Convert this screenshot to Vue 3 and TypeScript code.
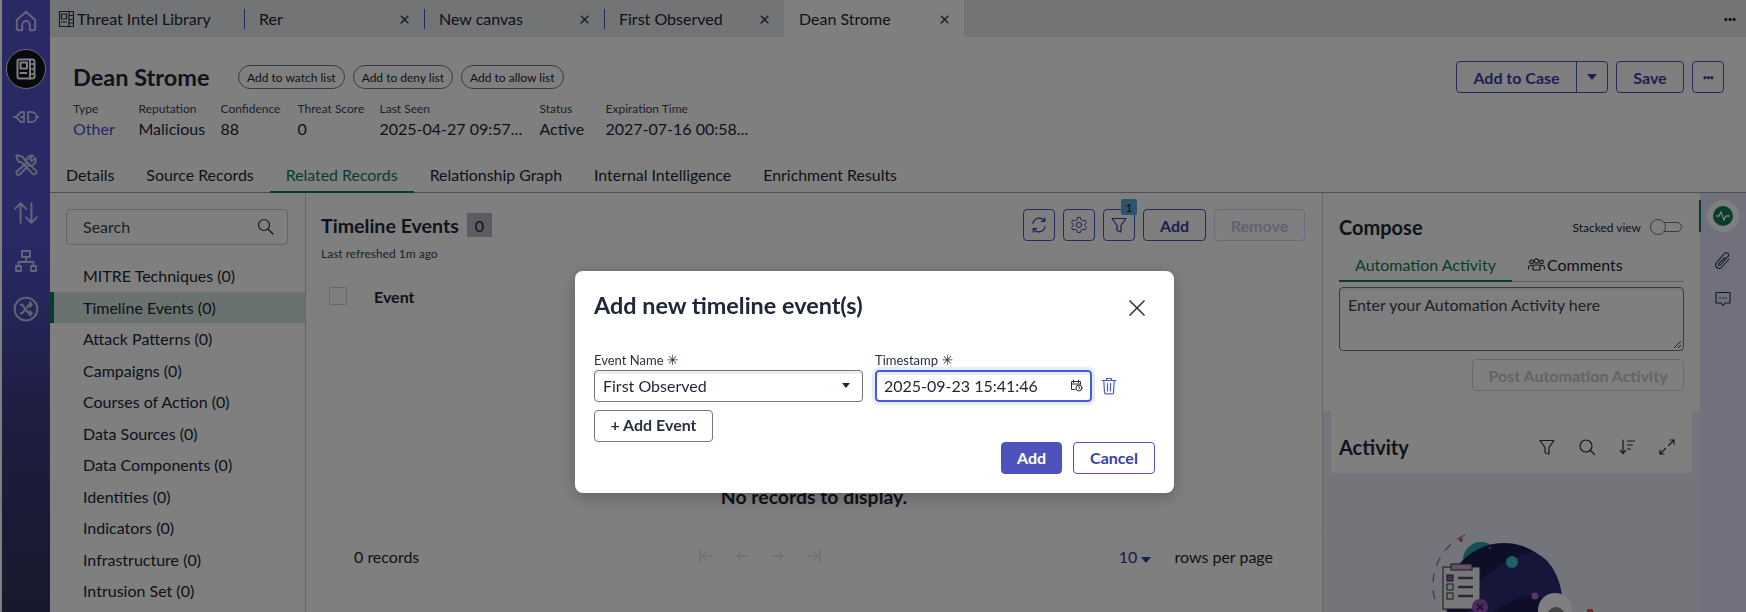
<script setup lang="ts">
interface MetaItem {
  label: string;
  value: string;
  link?: boolean;
}

const openTabs = ['Rer', 'New canvas', 'First Observed'];

const meta: MetaItem[] = [
  { label: 'Type', value: 'Other', link: true },
  { label: 'Reputation', value: 'Malicious' },
  { label: 'Confidence', value: '88' },
  { label: 'Threat Score', value: '0' },
  { label: 'Last Seen', value: '2025-04-27 09:57...' },
  { label: 'Status', value: 'Active' },
  { label: 'Expiration Time', value: '2027-07-16 00:58...' }
];

const chips = ['Add to watch list', 'Add to deny list', 'Add to allow list'];

const pageTabs = ['Details', 'Source Records', 'Related Records', 'Relationship Graph', 'Internal Intelligence', 'Enrichment Results'];

const relations = [
  'MITRE Techniques (0)',
  'Timeline Events (0)',
  'Attack Patterns (0)',
  'Campaigns (0)',
  'Courses of Action (0)',
  'Data Sources (0)',
  'Data Components (0)',
  'Identities (0)',
  'Indicators (0)',
  'Infrastructure (0)',
  'Intrusion Set (0)'
];
</script>

<template>
  <div class="app">
    <!-- 左侧导航 -->
    <nav class="rail">
      <div class="rail-item">
        <svg width="26" height="26" viewBox="0 0 24 24" class="ico"><path d="M3.5 11 12 3.5l8.500 7.500v8a1.500 1.500 0 0 1-1.500 1.500h-3.500v-5a3.500 3.500 0 0 0-7 0v5H5A1.500 1.500 0 0 1 3.500 19z" /></svg>
      </div>
      <div class="rail-item rail-active">
        <svg width="24" height="24" viewBox="0 0 24 24" class="ico"><rect x="3.500" y="2.500" width="17" height="19" rx="2" /><rect x="6.500" y="5.500" width="6.500" height="6" /><path d="M6.500 16h6M16 2.500v19M18 7h1M18 12h1M18 17h1" /></svg>
      </div>
      <div class="rail-item">
        <svg width="26" height="26" viewBox="0 0 26 26" class="ico"><path d="M1 13h2M3 13l5-5h3v10H8zM15 8h3.500a5 5 0 0 1 0 10H15zM24 13h1.500M8 13h3" /></svg>
      </div>
      <div class="rail-item">
        <svg width="26" height="26" viewBox="0 0 24 24" class="ico"><path d="M4 3 3 4l2 5 3 .5 10 10.500a2 2 0 0 0 3-3L10.500 7 9 4.500zM20.500 5.500 17.500 8.500 15.500 6.500 18.500 3.500a5 5 0 0 0-6 6.500L3.500 18a2 2 0 0 0 2.800 2.800l8-8.500a5 5 0 0 0 6.200-6.800z" /></svg>
      </div>
      <div class="rail-item">
        <svg width="26" height="26" viewBox="0 0 24 24" class="ico"><path d="M7 21V3M2 8l5-5 5 5M17 3v18M12 16l5 5 5-5" /></svg>
      </div>
      <div class="rail-item">
        <svg width="24" height="24" viewBox="0 0 24 24" class="ico"><rect x="8" y="2" width="8" height="6" /><rect x="2" y="17" width="5" height="5" /><rect x="17" y="17" width="5" height="5" /><path d="M12 8v5M4.500 17v-4h15v4" /></svg>
      </div>
      <div class="rail-item">
        <svg width="26" height="26" viewBox="0 0 24 24" class="ico"><circle cx="12" cy="12" r="10.500" /><path d="M7 8h1.500l6 8H17M7 16h1.500L11 12.800M13 10.500 14.500 8H17M15.500 6l2 2-2 2M15.500 14l2 2-2 2" /></svg>
      </div>
    </nav>

    <div class="main">
      <!-- 顶部标签栏 -->
      <div class="tabbar">
        <div class="tab tab-home">
          <svg width="15" height="16" viewBox="0 0 15 16" class="ico-thin"><rect x="0.500" y="0.500" width="14" height="15" /><rect x="2.500" y="3" width="5" height="5" /><path d="M2.500 11h5M10 .5v15M10 4.500h4.500M10 8.500h4.500M10 12h4.500" /></svg>
          <span>Threat Intel Library</span>
        </div>
        <div v-for="name in openTabs" :key="name" class="tab tab-sep">
          <span>{{ name }}</span>
          <span class="tab-close">×</span>
        </div>
        <div class="tab tab-current">
          <span>Dean Strome</span>
          <span class="tab-close">×</span>
        </div>
        <span class="tabbar-more">•••</span>
      </div>

      <!-- 记录头部 -->
      <header class="record-head">
        <div class="title-row">
          <h1>Dean Strome</h1>
          <span v-for="chip in chips" :key="chip" class="chip">{{ chip }}</span>
          <div class="head-actions">
            <div class="split-btn">
              <span class="split-main">Add to Case</span>
              <span class="split-caret"><i class="caret" /></span>
            </div>
            <button class="btn btn-save">Save</button>
            <button class="btn btn-more">•••</button>
          </div>
        </div>
        <div class="meta">
          <div v-for="item in meta" :key="item.label">
            <div class="meta-label">{{ item.label }}</div>
            <div class="meta-value" :class="{ 'meta-link': item.link }">{{ item.value }}</div>
          </div>
        </div>
      </header>

      <div class="page-tabs">
        <span v-for="name in pageTabs" :key="name" class="page-tab" :class="{ 'page-tab-on': name === 'Related Records' }">{{ name }}</span>
      </div>

      <div class="content">
        <!-- 关联类型列表 -->
        <aside class="relations">
          <div class="search">
            <span>Search</span>
            <svg width="17" height="17" viewBox="0 0 17 17" class="ico-thin"><circle cx="7" cy="7" r="5.500" /><path d="m11 11 5 5" /></svg>
          </div>
          <ul>
            <li v-for="name in relations" :key="name" :class="{ 'rel-on': name === 'Timeline Events (0)' }">{{ name }}</li>
          </ul>
        </aside>

        <!-- 表格区 -->
        <section class="records">
          <div class="records-head">
            <h2 class="records-title">Timeline Events</h2>
            <span class="count">0</span>
            <div class="tools">
              <button class="btn btn-icon">
                <svg width="18" height="18" viewBox="0 0 18 18" class="ico-btn"><path d="M3 7.500A6.300 6.300 0 0 1 14.500 5M15 10.500A6.300 6.300 0 0 1 3.500 13M14.800 1.800v3.500h-3.500M3.200 16.200v-3.500h3.500" /></svg>
              </button>
              <button class="btn btn-icon">
                <svg width="18" height="18" viewBox="0 0 24 24" class="ico-btn"><circle cx="12" cy="12" r="3.500" /><path d="M10 2h4l.6 3 2.500 1.400 3-1 2 3.500-2.300 2v2.200l2.300 2-2 3.500-3-1-2.500 1.400-.6 3h-4l-.6-3-2.500-1.400-3 1-2-3.500 2.300-2v-2.200l-2.300-2 2-3.500 3 1L9.400 5z" /></svg>
              </button>
              <button class="btn btn-icon btn-filter">
                <svg width="18" height="18" viewBox="0 0 18 18" class="ico-btn"><path d="M2 2.500h14l-5 7v6.500l-4-1.500v-5z" /></svg>
                <span class="filter-badge">1</span>
              </button>
              <button class="btn btn-add">Add</button>
              <button class="btn btn-off">Remove</button>
            </div>
          </div>
          <div class="refreshed">Last refreshed 1m ago</div>
          <div class="table-head">
            <span class="check" />
            <b>Event</b>
          </div>
          <div class="table-empty">No records to display.</div>
          <div class="table-foot">
            <span class="foot-count">0 records</span>
            <div class="pager">
              <svg width="16" height="16" viewBox="0 0 16 16" class="ico-pager"><path d="M2 2v12M14 8H4M8 4 4 8l4 4" /></svg>
              <svg width="16" height="16" viewBox="0 0 16 16" class="ico-pager"><path d="M14 8H3M7 4 3 8l4 4" /></svg>
              <svg width="16" height="16" viewBox="0 0 16 16" class="ico-pager"><path d="M2 8h11M9 4l4 4-4 4" /></svg>
              <svg width="16" height="16" viewBox="0 0 16 16" class="ico-pager"><path d="M14 2v12M2 8h10M8 4l4 4-4 4" /></svg>
            </div>
            <span class="per-page">10 <i class="caret" /></span>
            <span class="per-label">rows per page</span>
          </div>
        </section>

        <!-- 右侧活动面板 -->
        <section class="side">
          <div class="compose">
            <div class="compose-head">
              <h2>Compose</h2>
              <span class="stacked">Stacked view</span>
              <span class="toggle"><i /></span>
            </div>
            <div class="compose-tabs">
              <span class="compose-tab compose-on">Automation Activity</span>
              <span class="compose-tab">
                <svg width="17" height="13" viewBox="0 0 17 13" class="ico-thin"><circle cx="3.500" cy="4" r="1.800" /><circle cx="13.500" cy="4" r="1.800" /><circle cx="8.500" cy="3" r="2.200" /><path d="M.5 11V9.500a2 2 0 0 1 2-2h2M16.500 11V9.500a2 2 0 0 0-2-2h-2M5 12V9a2 2 0 0 1 2-2h3a2 2 0 0 1 2 2v3z" /></svg>
                Comments
              </span>
            </div>
            <div class="compose-input">
              Enter your Automation Activity here
              <svg width="9" height="9" viewBox="0 0 9 9" class="resize-grip"><path d="M1 8 8 1M5 8l3-3" /></svg>
            </div>
            <div class="post-row"><button class="btn btn-post">Post Automation Activity</button></div>
          </div>
          <div class="activity">
            <div class="activity-head">
              <h2>Activity</h2>
              <div class="activity-tools">
                <svg width="18" height="18" viewBox="0 0 18 18" class="ico-thin"><path d="M2 2.500h14l-5 7v6.500l-2.500-.5-1.500-1v-5z" /></svg>
                <svg width="18" height="18" viewBox="0 0 18 18" class="ico-thin"><circle cx="8" cy="8" r="6" /><path d="m12.500 12.500 4 4" /></svg>
                <svg width="18" height="18" viewBox="0 0 18 18" class="ico-thin"><path d="M5 2v13M2.500 12.500 5 15.500l2.500-3M9.500 3h7M9.500 7h5M9.500 11h3" /></svg>
                <svg width="18" height="18" viewBox="0 0 18 18" class="ico-thin"><path d="M16 2 10.500 7.500M12 2h4v4M2 16l5.500-5.500M2 12v4h4" /></svg>
              </div>
            </div>
            <svg class="space-art" width="178" height="100" viewBox="1422 520 178 100">
              <path d="M1464 535a55 55 0 0 0-30 65" fill="none" stroke="#a35bc0" stroke-width="1.300" stroke-dasharray="9 8" />
              <circle cx="1460" cy="540" r="2" fill="#e0564d" />
              <circle cx="1480" cy="560" r="18" fill="#29a3ab" />
              <circle cx="1503" cy="601" r="58" fill="#1d1c50" />
              <path d="M1520 555c20-10 40 15 41 46-15 5-20-10-40-4-20 6-30 20-55 22 0-30 20-50 54-64z" fill="#2d2c77" />
              <circle cx="1511" cy="562" r="6" fill="#3fc0c8" />
              <circle cx="1534" cy="596" r="3.500" fill="#b06ad0" />
              <circle cx="1489" cy="548" r="1" fill="#b06ad0" />
              <rect x="1442" y="567" width="37" height="42" fill="#f1f1f6" stroke="#333" stroke-width="1" />
              <rect x="1450" y="564" width="21" height="6" fill="#c4a8dc" stroke="#333" stroke-width="1" />
              <rect x="1446" y="575" width="6" height="6" fill="#9a52c8" stroke="#333" />
              <rect x="1446" y="584" width="6" height="6" fill="none" stroke="#333" />
              <rect x="1446" y="593" width="6" height="6" fill="none" stroke="#333" />
              <path d="M1457 578h15M1457 587h15M1457 596h15" stroke="#555" stroke-width="2.500" />
              <circle cx="1479" cy="607" r="8" fill="#9a52c8" />
              <path d="m1476 604 6 6m0-6-6 6" stroke="#222" stroke-width="1.300" />
              <circle cx="1554" cy="610" r="17" fill="#fff" />
              <circle cx="1555" cy="616" r="9" fill="#888" />
              <rect x="1586" y="609" width="6" height="5" fill="#e0564d" />
            </svg>
          </div>
        </section>

        <!-- 右侧图标栏 -->
        <aside class="side-rail">
          <span class="side-on">
            <span class="pulse">
              <svg width="16" height="16" viewBox="0 0 16 16" fill="none" stroke="#fff" stroke-width="1.300"><path d="M1 8h3l2-4 3 8 2-4h4" /></svg>
            </span>
          </span>
          <svg width="18" height="20" viewBox="0 0 18 20" class="ico-side"><path d="M15 8 8 16a3.500 3.500 0 0 1-5.500-4.500l8-9a2.300 2.300 0 0 1 3.500 3l-7.500 8.500a1 1 0 0 1-1.700-1.300L11 6.500" /></svg>
          <svg width="18" height="18" viewBox="0 0 18 18" class="ico-side"><path d="M2 2.500h14v10.500h-5l-2 2.500-2-2.500H2z" /><path d="M5.500 8h1M8.500 8h1M11.500 8h1" /></svg>
        </aside>
      </div>
    </div>

    <!-- 弹窗 -->
    <div class="overlay">
      <div class="dialog">
        <div class="dialog-head">
          <h3>Add new timeline event(s)</h3>
          <svg width="20" height="20" viewBox="0 0 20 20" class="dialog-close"><path d="m2.500 2.500 15 15m0-15-15 15" /></svg>
        </div>
        <div class="fields">
          <div class="field field-name">
            <label>Event Name <em>✳</em></label>
            <div class="input">
              <span>First Observed</span>
              <i class="caret caret-dark" />
            </div>
          </div>
          <div class="field field-time">
            <label>Timestamp <em>✳</em></label>
            <div class="input input-focus">
              <span>2025-09-23 15:41:46</span>
              <svg width="13" height="13" viewBox="0 0 13 13" class="ico-cal"><path d="M5 10.500H1.500v-8h9V5M1.500 5h9M3.500 1v2.500M8.500 1v2.500" /><circle cx="9" cy="9" r="3" /><path d="M9 7.500V9l1 .8" /></svg>
            </div>
          </div>
          <svg width="16" height="18" viewBox="0 0 16 18" class="ico-trash"><path d="M1 3.500h14M5.500 3.500V1.500h5v2M2.800 3.500l.7 12a1.500 1.500 0 0 0 1.500 1.400h6a1.500 1.500 0 0 0 1.500-1.400l.7-12M6.500 6.500v7.500M9.500 6.500v7.500" /></svg>
        </div>
        <button class="add-event">+ Add Event</button>
        <div class="dialog-actions">
          <button class="dlg-btn dlg-add">Add</button>
          <button class="dlg-btn dlg-cancel">Cancel</button>
        </div>
      </div>
    </div>
  </div>
</template>

<style>
html,
body {
  margin: 0;
  overflow: hidden;
}
</style>

<style scoped>
.app {
  position: relative;
  display: flex;
  width: 1746px;
  height: 612px;
  overflow: hidden;
  background: #fff;
  color: #1d2433;
  font-family: Lato, "Liberation Sans", sans-serif;
  font-size: 16px;
}

h1,
h2,
h3 {
  margin: 0;
}

button {
  font-family: inherit;
}

.ico,
.ico-thin,
.ico-btn,
.ico-pager,
.ico-side,
.ico-cal,
.ico-trash {
  fill: none;
  stroke-linejoin: round;
  stroke-linecap: round;
}

.ico {
  stroke: #fff;
  stroke-width: 1.800;
  opacity: 0.7;
}

.ico-thin {
  stroke: #2a3040;
  stroke-width: 1.200;
  flex: none;
}

.ico-btn {
  stroke: #3b3fa8;
  stroke-width: 1.200;
}

.rail {
  flex: none;
  width: 48px;
  margin-left: 2px;
  padding-top: 1px;
  display: flex;
  flex-direction: column;
  gap: 8px;
  background: linear-gradient(180deg, #5153cb 0%, #5153cb 40%, #3b3b7e 70%, #33335c 100%);
}

.rail-item {
  height: 40px;
  display: flex;
  align-items: center;
  justify-content: center;
}

.rail-active {
  width: 40px;
  margin-left: 4px;
  border-radius: 50%;
  background: #10131e;
  border: 1px solid #d8d8d8;
  box-sizing: border-box;
}

.rail-active .ico {
  opacity: 1;
  stroke-width: 2;
}

.main {
  flex: 1;
  min-width: 0;
  display: flex;
  flex-direction: column;
}

.tabbar {
  flex: none;
  height: 37px;
  display: flex;
  align-items: stretch;
  background: #e4e8ec;
}

.tab {
  width: 180px;
  box-sizing: border-box;
  padding-right: 14px;
  display: flex;
  align-items: center;
  color: #1d2433;
}

.tab-home {
  width: 194px;
  padding-left: 9px;
  gap: 3px;
}

.tab-sep::before {
  content: '';
  width: 1px;
  height: 20px;
  margin-right: 14px;
  background: #4a4fc0;
}

.tab-close {
  margin-left: auto;
  font-size: 19px;
  line-height: 1;
  color: #333a48;
}

.tab-current {
  padding-left: 15px;
  background: #fff;
}

.tabbar-more {
  margin-left: auto;
  padding-right: 10px;
  align-self: center;
  font-size: 8px;
  letter-spacing: -0.500px;
  color: #111;
}

.record-head {
  flex: none;
  height: 121px;
  box-sizing: border-box;
  padding: 24px 22px 0 23px;
}

.title-row {
  display: flex;
  align-items: center;
  height: 32px;
}

h1 {
  width: 165px;
  font-size: 23.500px;
  font-weight: 700;
  color: #20273a;
}

.chip {
  height: 24px;
  box-sizing: border-box;
  margin-right: 8px;
  padding: 0 8px;
  display: flex;
  align-items: center;
  border: 1px solid #6f7787;
  border-radius: 12px;
  font-size: 12px;
}

.head-actions {
  margin-left: auto;
  display: flex;
  gap: 8px;
}

.btn {
  height: 32px;
  box-sizing: border-box;
  padding: 0 15px;
  display: flex;
  align-items: center;
  justify-content: center;
  background: #fff;
  border: 1px solid #4d52bd;
  border-radius: 4px;
  color: #3b3fa8;
  font-size: 16px;
  font-weight: 700;
}

.btn-save {
  width: 68px;
  padding: 0;
}

.btn-more {
  width: 32px;
  padding: 0;
  font-size: 7px;
  letter-spacing: -0.500px;
}

.split-btn {
  display: flex;
  height: 32px;
  width: 152px;
  box-sizing: border-box;
  border: 1px solid #4d52bd;
  border-radius: 4px;
  color: #3b3fa8;
  font-weight: 700;
}

.split-main {
  width: 119px;
  display: flex;
  align-items: center;
  justify-content: center;
  border-right: 1px solid #4d52bd;
}

.split-caret {
  flex: 1;
  display: flex;
  align-items: center;
  justify-content: center;
}

.caret {
  display: inline-block;
  width: 0;
  height: 0;
  border-left: 5px solid transparent;
  border-right: 5px solid transparent;
  border-top: 6px solid #3b3fa8;
}

.caret-dark {
  border-left-width: 4px;
  border-right-width: 4px;
  border-top-width: 5px;
  border-top-color: #1d2433;
}

.meta {
  margin-top: 8px;
  display: grid;
  grid-template-columns: 65.500px 82px 77px 82px 160px 66px auto;
}

.meta-label {
  font-size: 12px;
  line-height: 16px;
  color: #3b4252;
}

.meta-value {
  margin-top: 1px;
  line-height: 22px;
  color: #1d2433;
}

.meta-link {
  color: #4350c8;
}

.page-tabs {
  flex: none;
  height: 34px;
  display: flex;
  border-bottom: 1px solid #9aa0aa;
}

.page-tab {
  padding: 0 16px;
  display: flex;
  align-items: center;
  margin-bottom: -1px;
  border-bottom: 2px solid transparent;
  font-size: 15.900px;
}

.page-tab-on {
  color: #0f7a54;
  border-bottom-color: #0f7a54;
}

.content {
  flex: 1;
  min-height: 0;
  display: flex;
}

.relations {
  flex: none;
  width: 256px;
  box-sizing: border-box;
  border-right: 1px solid #c8ccd2;
  padding-top: 16px;
}

.search {
  height: 36px;
  box-sizing: border-box;
  margin: 0 17px 0 16px;
  padding: 0 13px 1px 16px;
  display: flex;
  align-items: center;
  justify-content: space-between;
  border: 1px solid #c6cad0;
  border-radius: 4px;
  color: #3b4252;
}

ul {
  list-style: none;
  margin: 15px 0 0;
  padding: 0;
}

li {
  height: 31.500px;
  padding-left: 33px;
  display: flex;
  align-items: center;
}

.rel-on {
  padding-left: 29px;
  border-left: 4px solid #0f7a54;
  background: #d4e4e0;
}

.records {
  flex: none;
  width: 1016px;
  box-sizing: border-box;
  padding-top: 16px;
  display: flex;
  flex-direction: column;
}

.records-head {
  height: 32px;
  padding: 0 17px 0 15px;
  display: flex;
  align-items: center;
}

h2 {
  font-size: 20px;
  font-weight: 700;
  color: #20273a;
}

.records-title {
  font-size: 19.600px;
}

.count {
  width: 25px;
  height: 24px;
  margin-left: 8px;
  display: flex;
  align-items: center;
  justify-content: center;
  background: #b8b9c0;
}

.tools {
  margin-left: auto;
  display: flex;
  gap: 8px;
}

.btn-icon {
  width: 32px;
  padding: 0;
}

.btn-filter {
  position: relative;
}

.filter-badge {
  position: absolute;
  top: -11px;
  right: -3px;
  width: 16px;
  height: 16px;
  display: flex;
  align-items: center;
  justify-content: center;
  background: #5ba8d8;
  border-radius: 2px;
  color: #111;
  font-size: 12px;
  font-weight: 400;
}

.btn-add {
  width: 63px;
  padding: 0;
}

.btn-off {
  width: 91px;
  padding: 0;
  border-color: #d4d6f0;
  color: #c0c2e4;
}

.refreshed {
  margin-top: 5px;
  padding-left: 15px;
  font-size: 12px;
  line-height: 16px;
  color: #3b4252;
}

.table-head {
  margin-top: 18px;
  height: 32px;
  padding-left: 23px;
  display: flex;
  align-items: center;
}

.check {
  width: 16px;
  height: 16px;
  margin-right: 27px;
  border: 1px solid #d0d3d8;
  border-radius: 2px;
}

.table-empty {
  flex: 1;
  display: flex;
  align-items: flex-end;
  justify-content: center;
  padding-bottom: 22px;
  font-size: 19.400px;
  font-weight: 700;
}

.table-foot {
  flex: none;
  height: 82px;
  box-sizing: border-box;
  padding: 0 49px 31px 48px;
  display: flex;
  align-items: center;
  border-top: 1px solid #f2f2f4;
}

.foot-count {
  width: 344px;
}

.pager {
  display: flex;
  gap: 20px;
}

.ico-pager {
  stroke: #d0d2d8;
  stroke-width: 1;
}

.per-page {
  margin-left: auto;
  margin-right: 23px;
  color: #2d3090;
}

.side {
  flex: none;
  width: 378px;
  box-sizing: border-box;
  border-left: 1px solid #c8ccd2;
  display: flex;
  flex-direction: column;
  background: #e8eaf4;
}

.compose {
  height: 218px;
  box-sizing: border-box;
  padding: 18px 16px 0;
  background: #fff;
}

.compose-head {
  height: 32px;
  padding-right: 2px;
  display: flex;
  align-items: center;
}

.stacked {
  margin-left: auto;
  margin-right: 9px;
  font-size: 12px;
}

.toggle {
  position: relative;
  width: 32px;
  height: 10px;
  box-sizing: border-box;
  border: 1px solid #6f7787;
  border-radius: 5px;
}

.toggle i {
  position: absolute;
  left: -1px;
  top: -4px;
  width: 16px;
  height: 16px;
  box-sizing: border-box;
  border: 1px solid #6f7787;
  border-radius: 50%;
  background: #fff;
}

.compose-tabs {
  margin-top: 6px;
  height: 32px;
  display: flex;
  border-bottom: 1px solid #b8bcc4;
}

.compose-tab {
  padding: 0 16px;
  display: flex;
  align-items: center;
  gap: 2px;
  margin-bottom: -1px;
  border-bottom: 2px solid transparent;
}

.compose-on {
  color: #0f7a54;
  border-bottom-color: #0f7a54;
}

.compose-input {
  position: relative;
  margin-top: 5px;
  height: 64px;
  box-sizing: border-box;
  padding: 7px 8px;
  border: 1px solid #6f7787;
  border-radius: 4px;
  box-shadow: inset 0 2px 0 #eee;
  color: #3b4252;
}

.resize-grip {
  position: absolute;
  right: 1px;
  bottom: 1px;
  fill: none;
  stroke: #444;
  stroke-width: 1;
}

.post-row {
  margin-top: 8px;
  display: flex;
  justify-content: flex-end;
}

.btn-post {
  width: 212px;
  padding: 0;
  border-color: #d0d3d8;
  color: #c6c8ce;
}

.activity {
  flex: 1;
  min-height: 0;
  overflow: hidden;
  display: flex;
  flex-direction: column;
  align-items: center;
}

.activity-head {
  width: 361px;
  height: 62px;
  box-sizing: border-box;
  flex: none;
  padding: 9px 16px 0 8px;
  display: flex;
  align-items: center;
  justify-content: space-between;
  background: #fff;
}

.activity-tools {
  display: flex;
  gap: 22px;
}

.space-art {
  flex: none;
  margin-top: 47px;
}

.side-rail {
  flex: 1;
  min-width: 0;
  padding-top: 7px;
  display: flex;
  flex-direction: column;
  align-items: center;
  gap: 19px;
  background: #e0e3fa;
}

.side-on {
  position: relative;
  width: 32px;
  height: 32px;
  display: flex;
  align-items: center;
  justify-content: center;
  border-radius: 50%;
  background: #fff;
}

.side-on::before {
  content: '';
  position: absolute;
  left: -8px;
  top: 0;
  width: 2px;
  height: 32px;
  background: #0f7a54;
}

.pulse {
  width: 20px;
  height: 20px;
  display: flex;
  align-items: center;
  justify-content: center;
  border-radius: 50%;
  background: #0f7a54;
}

.ico-side {
  stroke: #2a3040;
  stroke-width: 1.100;
}

.overlay {
  position: absolute;
  inset: 0;
  display: flex;
  justify-content: center;
  padding-top: 271px;
  padding-left: 3px;
  box-sizing: border-box;
  background: rgba(0, 0, 0, 0.5);
  backdrop-filter: blur(0.4px);
}

.dialog {
  position: relative;
  width: 599px;
  height: 222px;
  box-sizing: border-box;
  padding: 18px 19px 0;
  border-radius: 8px;
  background: #fff;
  box-shadow: 0 4px 16px rgba(0, 0, 0, 0.25);
}

.dialog-head {
  display: flex;
  align-items: center;
  justify-content: space-between;
  height: 32px;
  padding-right: 8px;
}

h3 {
  font-size: 23.400px;
  font-weight: 700;
  color: #20273a;
}

.dialog-close {
  fill: none;
  stroke: #2a3040;
  stroke-width: 1.500;
  margin-top: 6px;
}

.fields {
  margin-top: 30px;
  display: flex;
  align-items: flex-end;
}

.field-name {
  width: 269px;
  margin-right: 12px;
}

.field-time {
  width: 217px;
  margin-right: 9px;
}

label {
  display: block;
  height: 19px;
  font-size: 13px;
  line-height: 19px;
  color: #2a3040;
}

em {
  font-family: "DejaVu Sans", sans-serif;
  font-style: normal;
  font-size: 14px;
  line-height: 1;
}

.input {
  height: 32px;
  box-sizing: border-box;
  padding: 0 12px 2px 8px;
  display: flex;
  align-items: center;
  justify-content: space-between;
  border: 1px solid #6f7787;
  border-radius: 4px;
  box-shadow: inset 0 3px 0 #eee;
  color: #1d2433;
  font-size: 16px;
}

.input-focus {
  border: 2px solid #3f5be0;
  padding: 0 7px 2px;
  outline: 3px solid #e6ebff;
  color: #1d2433;
}

.ico-cal {
  stroke: #2a3040;
  stroke-width: 1;
}

.ico-trash {
  stroke: #4f5ad0;
  stroke-width: 1.200;
  margin-bottom: 7px;
}

.add-event {
  display: block;
  margin-top: 8px;
  width: 119px;
  height: 32px;
  padding: 0 0 3px;
  background: #fff;
  border: 1px solid #6f7787;
  border-radius: 4px;
  color: #2a3040;
  font-size: 16px;
  font-weight: 700;
}

.dialog-actions {
  position: absolute;
  right: 19px;
  bottom: 19px;
  display: flex;
  gap: 11px;
}

.dlg-btn {
  height: 32px;
  padding: 0 0 2px;
  border-radius: 4px;
  font-size: 16px;
  font-weight: 700;
}

.dlg-add {
  width: 61px;
  background: #4d52bd;
  border: 1px solid #4d52bd;
  color: #fff;
}

.dlg-cancel {
  width: 82px;
  background: #fff;
  border: 1px solid #4d52bd;
  color: #3b3fa8;
}
</style>
